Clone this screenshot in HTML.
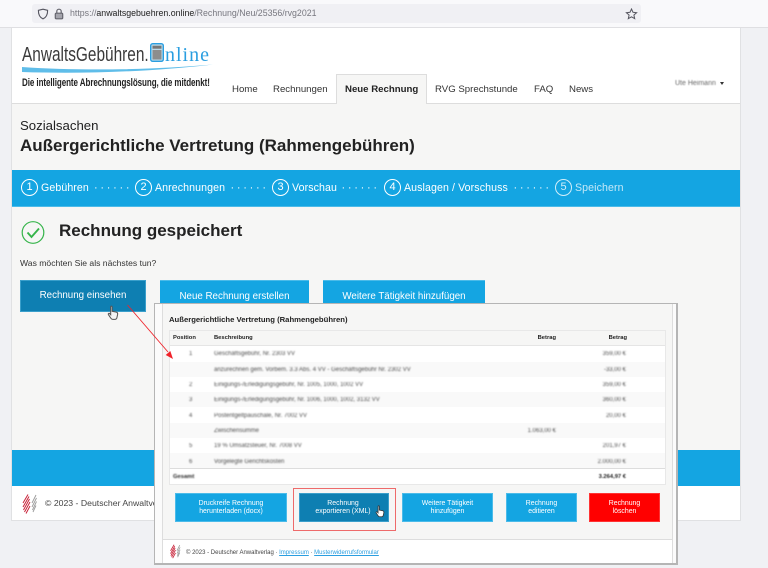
<!DOCTYPE html>
<html lang="de"><head><meta charset="utf-8"><title>AnwaltsGebühren.Online</title>
<style>
*{box-sizing:border-box}
html,body{margin:0;padding:0;width:768px;height:568px;overflow:hidden;background:#f0f1f4;font-family:"Liberation Sans",sans-serif;color:#222}
.a{position:absolute;white-space:nowrap}
.box{position:absolute}
.btn{position:absolute;background:#14a5e2;color:#fff;text-align:center;display:flex;align-items:center;justify-content:center;white-space:nowrap}
.step{font-size:10.6px;color:#fff;top:181px;line-height:14px;letter-spacing:.1px}
.num{position:absolute;top:179px;width:17px;height:17px;border:1.3px solid #fff;border-radius:50%;color:#fff;font-size:11px;line-height:15px;text-align:center}
.dots{font-size:11px;color:#fff;top:181px;line-height:14px;letter-spacing:2.7px}
.nav{position:absolute;top:83px;font-size:9.65px;color:#333;line-height:13px}
.bl{filter:blur(.75px);color:#4a4a4a;font-size:6px;line-height:8px}
.bh{filter:blur(.35px);color:#222;font-size:5.8px;font-weight:bold;line-height:8px}
.pb{font-size:6.9px;line-height:7.8px;top:493px;height:29px;border:1px solid #4bbbe9}
.main{font-size:9.75px;padding-bottom:1px}
</style></head><body>

<!-- browser bar -->
<div class="box" style="left:0;top:0;width:768px;height:28px;background:#f9f9fb;border-bottom:1px solid #dfdfe2"></div>
<div class="box" style="left:32px;top:4px;width:609px;height:19px;background:#f0f0f4;border-radius:3px"></div>
<svg class="box" style="left:36px;top:7px" width="14" height="14" viewBox="0 0 14 14" fill="none" stroke="#55555f" stroke-width="1.1"><path d="M7 2.2 L11.6 3.3 C11.7 7.5 10.3 10.4 7 11.9 C3.7 10.4 2.3 7.5 2.4 3.3 Z"/></svg>
<svg class="box" style="left:52px;top:7px" width="14" height="14" viewBox="0 0 14 14" fill="none" stroke="#66666f" stroke-width="1.2"><rect x="3.3" y="6.2" width="7.4" height="5.6" rx="1" fill="#a5a5ad"/><path d="M4.8 6V4.4a2.2 2.2 0 0 1 4.4 0V6"/></svg>
<div class="a" style="left:70px;top:8px;font-size:8.8px;line-height:11px;color:#77777f">https://<span style="color:#222">anwaltsgebuehren.online</span>/Rechnung/Neu/25356/rvg2021</div>
<svg class="box" style="left:625px;top:8px" width="13" height="12" viewBox="0 0 13 12" fill="none" stroke="#55555f" stroke-width="1"><path d="M6.5 1 L8 4.3 L11.6 4.7 L8.9 7 L9.7 10.6 L6.5 8.8 L3.3 10.6 L4.1 7 L1.4 4.7 L5 4.3 Z"/></svg>

<!-- page frame -->
<div class="box" style="left:11px;top:28px;width:730px;height:493px;background:#fff;border:1px solid #e0e1e3;border-top:0"></div>
<div class="box" style="left:12px;top:103px;width:728px;height:347px;background:#f6f6f5;border-top:1px solid #ddd"></div>

<!-- logo -->
<div class="a" style="left:22px;top:42.5px;font-size:20px;line-height:24px;color:#3a3a3a;transform:scaleX(.77);transform-origin:left top">AnwaltsGebühren.</div>
<svg class="box" style="left:150px;top:43px" width="14" height="19" viewBox="0 0 14 19"><rect x=".7" y=".7" width="12.6" height="17.6" rx="2" fill="#bcd9e8" stroke="#2a9ee0" stroke-width="1.4"/><rect x="2.5" y="2.7" width="9" height="3" fill="#777"/><rect x="2.5" y="7" width="9" height="9.5" fill="#8d8d8d"/></svg>
<div class="a" style="left:165px;top:44px;font-family:'Liberation Serif',serif;font-size:20px;line-height:22px;color:#2a9ee0;letter-spacing:1px">nline</div>
<svg class="box" style="left:20px;top:62px" width="196" height="12" viewBox="0 0 196 12"><path d="M2 5 C60 9 130 8 193 2.5 C130 10 60 12 2 10 Z" fill="#5fbde9"/></svg>
<div class="a" style="left:22px;top:76px;font-size:11.3px;line-height:14px;color:#222;font-weight:bold;transform:scaleX(.71);transform-origin:left top;filter:blur(.2px);letter-spacing:-.1px">Die intelligente Abrechnungslösung, die mitdenkt!</div>

<!-- nav -->
<div class="nav" style="left:232px">Home</div>
<div class="nav" style="left:273px">Rechnungen</div>
<div class="box" style="left:336px;top:74px;width:91px;height:30px;background:#f6f6f5;border:1px solid #ddd;border-bottom:0"></div>
<div class="nav" style="left:345px;font-weight:bold;color:#222">Neue Rechnung</div>
<div class="nav" style="left:435px">RVG Sprechstunde</div>
<div class="nav" style="left:534px">FAQ</div>
<div class="nav" style="left:569px">News</div>
<div class="a" style="left:675px;top:79px;font-size:7px;line-height:9px;color:#666;filter:blur(.6px)">Ute Heimann</div>
<div class="box" style="left:720px;top:82px;border-left:2px solid transparent;border-right:2px solid transparent;border-top:3px solid #333"></div>

<!-- titles -->
<div class="a" style="left:20px;top:118px;font-size:13.2px;line-height:16px;color:#222">Sozialsachen</div>
<div class="a" style="left:20px;top:136px;font-size:17px;line-height:20px;font-weight:bold;color:#222">Außergerichtliche Vertretung (Rahmengebühren)</div>

<!-- steps -->
<div class="box" style="left:12px;top:170px;width:728px;height:37px;background:#14a5e2;border-bottom:1px solid #4bbbe9"></div>
<div class="num" style="left:21px">1</div><div class="a step" style="left:41px">Gebühren</div><div class="a dots" style="left:94px">······</div>
<div class="num" style="left:135px">2</div><div class="a step" style="left:155px">Anrechnungen</div><div class="a dots" style="left:230.5px">······</div>
<div class="num" style="left:272px">3</div><div class="a step" style="left:292px">Vorschau</div><div class="a dots" style="left:341.5px">······</div>
<div class="num" style="left:384px">4</div><div class="a step" style="left:404px">Auslagen / Vorschuss</div><div class="a dots" style="left:513.5px">······</div>
<div class="num" style="left:555px;opacity:.8">5</div><div class="a step" style="left:575px;opacity:.75">Speichern</div>

<!-- saved -->
<svg class="box" style="left:21px;top:220px" width="24" height="25" viewBox="0 0 24 25" fill="none" stroke="#35b44a"><circle cx="12" cy="12.5" r="10.8" stroke-width="1.2"/><path d="M6.5 12.5 L10.5 17 L18 8.5" stroke-width="1.9"/></svg>
<div class="a" style="left:59px;top:221px;font-size:17px;line-height:20px;font-weight:bold;color:#222">Rechnung gespeichert</div>
<div class="a" style="left:20px;top:258px;font-size:8.6px;line-height:11px;color:#333">Was möchten Sie als nächstes tun?</div>

<div class="btn main" style="left:20px;top:280px;width:126px;height:32px;background:#0e7fb2;border:1px solid #3a9fcb">Rechnung einsehen</div>
<div class="btn main" style="left:160px;top:280px;width:149px;height:32px;border-top:1px solid #4bbbe9">Neue Rechnung erstellen</div>
<div class="btn main" style="left:323px;top:280px;width:162px;height:32px;border-top:1px solid #4bbbe9">Weitere Tätigkeit hinzufügen</div>

<!-- hand cursor 1 -->
<svg class="box" style="left:107px;top:305px" width="12" height="16" viewBox="0 0 14 18"><path d="M4.3 1.8 C4.3.8 6 .8 6 1.8 V7 L11 8 C12.3 8.4 12.6 9.4 12.4 10.6 L11.6 14.3 C11.4 15.6 10.6 16.4 9.2 16.4 H6.6 C5.6 16.4 5 15.9 4.4 15 L1.6 10.8 C1 9.8 2.3 8.9 3.1 9.7 L4.3 11 Z" fill="#f4f4f4" stroke="#555" stroke-width="1.2"/></svg>

<!-- blue band / footer -->
<div class="box" style="left:12px;top:450px;width:728px;height:36px;background:#14a5e2"></div>
<svg class="box" style="left:21px;top:492px" width="18" height="24" viewBox="0 0 18 24" fill="none"><path d="M7 2.5 L2 11 M8 4.5 L2 15 M8.5 7 L2.5 18 M9 10 L3.5 20 M9 14 L5 21.5" stroke="#c8243a" stroke-width="1"/><path d="M15 3 L11 11 M15.5 6 L11 15 M15.5 9.5 L11.5 18 M15 13.5 L12 20" stroke="#999" stroke-width=".9"/></svg>
<div class="a" style="left:45px;top:498px;font-size:8.7px;line-height:11px;color:#444">© 2023 - Deutscher Anwaltverlag</div>

<!-- popup -->
<div class="box" style="left:154px;top:303px;width:524px;height:262px;background:#f6f6f5;border:1px solid #b5b5b5;border-right-width:2px;border-bottom-width:2px"></div>
<div class="box" style="left:155px;top:304px;width:8px;height:259px;background:#fbfbfb;border-right:1px solid #ddd"></div>
<div class="box" style="left:672px;top:304px;width:4px;height:259px;background:#fbfbfb;border-left:1px solid #ddd"></div>
<div class="a" style="left:169px;top:315px;font-size:7.7px;line-height:10px;font-weight:bold;color:#222;filter:blur(.2px)">Außergerichtliche Vertretung (Rahmengebühren)</div>

<!-- table -->
<div class="box" style="left:169px;top:330px;width:497px;height:155px;background:#fff;border:1px solid #e8e8e8"></div>
<div class="box" style="left:170px;top:331px;width:495px;height:15px;background:#f6f6f5;border-bottom:1px solid #e5e5e5"></div>
<div class="box" style="left:170px;top:362px;width:495px;height:15px;background:#f9f9f9"></div>
<div class="box" style="left:170px;top:392px;width:495px;height:15px;background:#f9f9f9"></div>
<div class="box" style="left:170px;top:423px;width:495px;height:15px;background:#f9f9f9"></div>
<div class="box" style="left:170px;top:453px;width:495px;height:15px;background:#f9f9f9"></div>
<div class="box" style="left:170px;top:468px;width:495px;height:1px;background:#ddd"></div>

<div class="a bh" style="left:173px;top:334px">Position</div>
<div class="a bh" style="left:214px;top:334px">Beschreibung</div>
<div class="a bh" style="right:212px;top:334px">Betrag</div>
<div class="a bh" style="right:141px;top:334px">Betrag</div>

<div class="a bl" style="left:189px;top:350px">1</div><div class="a bl" style="left:214px;top:350px">Geschäftsgebühr, Nr. 2303 VV</div><div class="a bl" style="right:142px;top:350px">359,00 €</div>
<div class="a bl" style="left:214px;top:366px">anzurechnen gem. Vorbem. 3.3 Abs. 4 VV - Geschäftsgebühr Nr. 2302 VV</div><div class="a bl" style="right:142px;top:366px">-33,00 €</div>
<div class="a bl" style="left:189px;top:381px">2</div><div class="a bl" style="left:214px;top:381px">Einigungs-/Erledigungsgebühr, Nr. 1005, 1000, 1002 VV</div><div class="a bl" style="right:142px;top:381px">359,00 €</div>
<div class="a bl" style="left:189px;top:396px">3</div><div class="a bl" style="left:214px;top:396px">Einigungs-/Erledigungsgebühr, Nr. 1006, 1000, 1002, 3132 VV</div><div class="a bl" style="right:142px;top:396px">360,00 €</div>
<div class="a bl" style="left:189px;top:412px">4</div><div class="a bl" style="left:214px;top:412px">Postentgeltpauschale, Nr. 7002 VV</div><div class="a bl" style="right:142px;top:412px">20,00 €</div>
<div class="a bl" style="left:214px;top:427px">Zwischensumme</div><div class="a bl" style="right:212px;top:427px">1.063,00 €</div>
<div class="a bl" style="left:189px;top:442px">5</div><div class="a bl" style="left:214px;top:442px">19 % Umsatzsteuer, Nr. 7008 VV</div><div class="a bl" style="right:142px;top:442px">201,97 €</div>
<div class="a bl" style="left:189px;top:458px">6</div><div class="a bl" style="left:214px;top:458px">Vorgelegte Gerichtskosten</div><div class="a bl" style="right:142px;top:458px">2.000,00 €</div>
<div class="a bh" style="left:173px;top:473px;filter:blur(.7px)">Gesamt</div><div class="a bh" style="right:142px;top:473px;filter:blur(.6px)">3.264,97 €</div>

<!-- popup buttons -->
<div class="btn pb" style="left:175px;width:112px">Druckreife Rechnung<br>herunterladen (docx)</div>
<div class="btn pb" style="left:299px;width:90px;background:#0e7fb2;border-color:#3a9fcb;padding-right:2px">Rechnung<br>exportieren (XML)</div>
<div class="btn pb" style="left:402px;width:91px">Weitere Tätigkeit<br>hinzufügen</div>
<div class="btn pb" style="left:506px;width:71px">Rechnung<br>editieren</div>
<div class="btn pb" style="left:589px;width:71px;background:#f00;border-color:#f33">Rechnung<br>löschen</div>
<div class="box" style="left:293px;top:488px;width:103px;height:43px;border:1px solid #ee6a6a"></div>
<svg class="box" style="left:375px;top:505px" width="10" height="13" viewBox="0 0 14 18"><path d="M4.3 1.8 C4.3.8 6 .8 6 1.8 V7 L11 8 C12.3 8.4 12.6 9.4 12.4 10.6 L11.6 14.3 C11.4 15.6 10.6 16.4 9.2 16.4 H6.6 C5.6 16.4 5 15.9 4.4 15 L1.6 10.8 C1 9.8 2.3 8.9 3.1 9.7 L4.3 11 Z" fill="#fff" stroke="#333" stroke-width="1.1"/></svg>

<!-- popup footer -->
<div class="box" style="left:163px;top:539px;width:509px;height:24px;background:#fff;border-top:1px solid #ddd"></div>
<svg class="box" style="left:169px;top:543px" width="13" height="17" viewBox="0 0 18 24" fill="none"><path d="M7 2.5 L2 11 M8 4.5 L2 15 M8.5 7 L2.5 18 M9 10 L3.5 20 M9 14 L5 21.5" stroke="#c8243a" stroke-width="1.2"/><path d="M15 3 L11 11 M15.5 6 L11 15 M15.5 9.5 L11.5 18 M15 13.5 L12 20" stroke="#999" stroke-width="1.1"/></svg>
<div class="a" style="left:186px;top:549px;font-size:6px;line-height:8px;color:#444;filter:blur(.2px)">© 2023 - Deutscher Anwaltverlag · <span style="color:#2a9ee0;text-decoration:underline">Impressum</span> · <span style="color:#2a9ee0;text-decoration:underline">Musterwiderrufsformular</span></div>

<!-- red arrow -->
<svg class="box" style="left:120px;top:300px" width="60" height="70" viewBox="0 0 60 70"><path d="M7.5 5 L48 52" stroke="#f0222a" stroke-width=".9"/><path d="M53 59 L45.7 55 L50.3 51 Z" fill="#f0222a"/></svg>
</body></html>
